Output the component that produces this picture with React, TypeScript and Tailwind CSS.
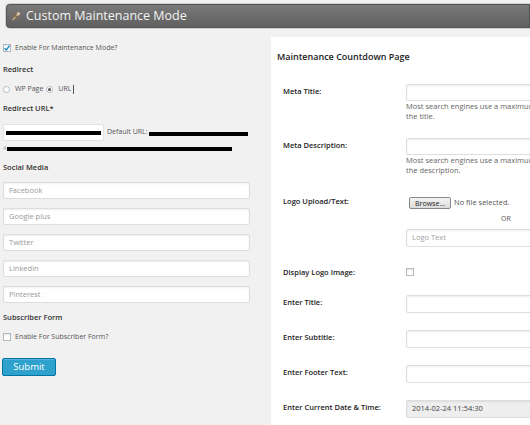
import type { ReactNode } from 'react';

function Check({ checked = false }: { checked?: boolean }) {
  return (
    <span className="relative inline-block h-[8px] w-[8px] shrink-0 border border-[#b4b9be] bg-white shadow-[inset_0_1px_2px_rgba(0,0,0,0.1)]">
      {checked ? (
        <svg viewBox="0 0 8 8" className="absolute left-[-1px] top-[-1px] h-[8px] w-[8px]">
          <path d="M1.5 4.2 L3.3 6 L6.6 1.6" fill="none" stroke="#1e8cbe" strokeWidth="1.4" />
        </svg>
      ) : null}
    </span>
  );
}

function Radio({ checked = false }: { checked?: boolean }) {
  return (
    <span className="flex h-[7px] w-[7px] shrink-0 items-center justify-center rounded-full border border-[#b4b9be] bg-white">
      {checked ? <span className="h-[3px] w-[3px] rounded-full bg-[#555]" /> : null}
    </span>
  );
}

function Field({
  placeholder,
  className = '',
  tone = 'text-[#a0a0a0] bg-white',
}: {
  placeholder?: string;
  className?: string;
  tone?: string;
}) {
  return (
    <div
      className={`flex items-center rounded-[2px] border border-[#dddddd] px-[5px] text-[7.5px] shadow-[inset_0_1px_2px_rgba(0,0,0,0.07)] ${tone} ${className}`}
    >
      {placeholder}
    </div>
  );
}

function Row({
  label,
  children,
  className = '',
  lead = 'leading-[14px]',
}: {
  label: string;
  children: ReactNode;
  className?: string;
  lead?: string;
}) {
  return (
    <div className={`flex ${className}`}>
      <div className={`w-[123px] shrink-0 text-[7.5px] font-semibold text-[#222] ${lead}`}>{label}</div>
      <div className="min-w-0 flex-1">{children}</div>
    </div>
  );
}

function Help({ children }: { children: ReactNode }) {
  return <p className="whitespace-nowrap text-[7.5px] leading-[10px] text-[#666]">{children}</p>;
}

export default function App() {
  const socials = ['Facebook', 'Google plus', 'Twitter', 'Linkedin', 'Pinterest'];

  return (
    <div className="h-[425px] w-[530px] overflow-hidden bg-[#f1f1f1] font-['Open_Sans',sans-serif] text-[#444]">
      <header className="ml-[5px] mt-[3px] flex h-[26px] items-center rounded-l-[5px] border border-r-0 border-[#cfcfcf] bg-gradient-to-b from-[#7a7a7a] to-[#5f5f5f] pl-[5px] shadow-[inset_0_0_0_1px_#555]">
        <svg viewBox="0 0 10 10" className="h-[10px] w-[10px]">
          <path d="M2 8.5 L7 3.5" stroke="#c9a77a" strokeWidth="1.7" strokeLinecap="round" />
          <path d="M2.5 3 L7.5 8" stroke="#8a6a48" strokeWidth="1.4" strokeLinecap="round" />
          <circle cx="7.4" cy="2.8" r="1.7" fill="#d8c09a" />
        </svg>
        <h1 className="ml-[5px] text-[12.5px] leading-none text-[#f4f4f4]">Custom Maintenance Mode</h1>
      </header>

      <div className="mt-[8px] flex">
        <div className="w-[271px] shrink-0 pl-[3px]">
          <label className="mt-[6px] flex items-center gap-[4px] text-[7px] leading-[10px] text-[#555]">
            <Check checked />
            Enable For Maintenance Mode?
          </label>

          <h3 className="mt-[11px] text-[7.5px] font-semibold leading-[10px] text-[#333]">Redirect</h3>

          <div className="mt-[10px] flex items-center text-[7px] leading-[10px] text-[#555]">
            <Radio />
            <span className="ml-[5px]">WP Page</span>
            <span className="ml-[3px]">
              <Radio checked />
            </span>
            <span className="ml-[5px]">URL</span>
            <span className="ml-[2px] h-[9px] w-px bg-[#555]" />
          </div>

          <h3 className="mt-[9px] text-[7.5px] font-semibold leading-[10px] text-[#333]">Redirect URL*</h3>

          <div className="mt-[11px] flex items-center">
            <div className="flex h-[17px] w-[101px] items-center rounded-[2px] border border-[#e2e2e2] bg-white px-[2px]">
              <div className="h-[4px] w-[96px] bg-black" />
            </div>
            <span className="ml-[3px] text-[7px] text-[#555]">Default URL:</span>
            <div className="ml-[1px] mt-[2px] h-[4px] w-[99px] bg-black" />
          </div>
          <div className="mt-[3px] flex items-center">
            <span className="text-[6px] text-[#999]">A</span>
            <div className="h-[4px] w-[225px] bg-black" />
          </div>

          <h3 className="mt-[9px] text-[7.5px] font-semibold leading-[10px] text-[#333]">Social Media</h3>

          <div className="mt-[10px] flex flex-col gap-[9px]">
            {socials.map((s) => (
              <Field key={s} placeholder={s} className="h-[17px] w-[247px]" tone="bg-white text-[#999]" />
            ))}
          </div>

          <h3 className="mt-[9px] text-[7.5px] font-semibold leading-[10px] text-[#333]">Subscriber Form</h3>

          <label className="mt-[10px] flex items-center gap-[4px] text-[7px] leading-[10px] text-[#555]">
            <Check />
            Enable For Subscriber Form?
          </label>

          <button className="ml-[-1px] mt-[16px] h-[18px] w-[54px] rounded-[2px] border border-[#0074a2] bg-[#2ea2cc] text-[9.5px] text-white shadow-[inset_0_1px_0_rgba(120,200,230,0.5)]">
            Submit
          </button>
        </div>

        <section className="h-[400px] flex-1 bg-white pl-[12px]">
          <h2 className="ml-[-6px] mt-[15px] text-[9px] font-semibold leading-[10px] text-[#222]">
            Maintenance Countdown Page
          </h2>

          <Row label="Meta Title:" className="mt-[22px]">
            <Field className="h-[17px] w-[140px]" />
            <Help>Most search engines use a maximum of 60 chars for</Help>
            <Help>the title.</Help>
          </Row>

          <Row label="Meta Description:" className="mt-[17px]">
            <Field className="h-[17px] w-[140px]" />
            <Help>Most search engines use a maximum of 160 chars for</Help>
            <Help>the description.</Help>
          </Row>

          <Row label="Logo Upload/Text:" className="mt-[22px]" lead="leading-[8px]">
            <div className="ml-[3px] flex items-center">
              <button className="h-[12px] w-[42px] rounded-[2px] border border-[#888] bg-gradient-to-b from-[#f4f4f4] to-[#dcdcdc] text-[7px] leading-none text-[#222]">
                Browse...
              </button>
              <span className="ml-[3px] text-[7.5px] text-[#555]">No file selected.</span>
            </div>
            <div className="mt-[3px] pl-[95px] text-[7px] leading-[14px] text-[#555]">OR</div>
            <Field placeholder="Logo Text" className="mt-[3px] h-[18px] w-[140px]" />
          </Row>

          <Row label="Display Logo Image:" className="mt-[18px]">
            <div className="flex h-[14px] items-center">
              <Check />
            </div>
          </Row>

          <Row label="Enter Title:" className="mt-[16px]">
            <Field className="h-[18px] w-[140px]" />
          </Row>

          <Row label="Enter Subtitle:" className="mt-[17px]">
            <Field className="h-[18px] w-[140px]" />
          </Row>

          <Row label="Enter Footer Text:" className="mt-[17px]">
            <Field className="h-[18px] w-[140px]" />
          </Row>

          <Row label="Enter Current Date & Time:" className="mt-[17px]">
            <Field
              className="h-[18px] w-[140px]"
              tone="bg-[#eeeeee] text-[#444]"
              placeholder="2014-02-24 11:54:30"
            />
          </Row>
        </section>
      </div>
    </div>
  );
}
